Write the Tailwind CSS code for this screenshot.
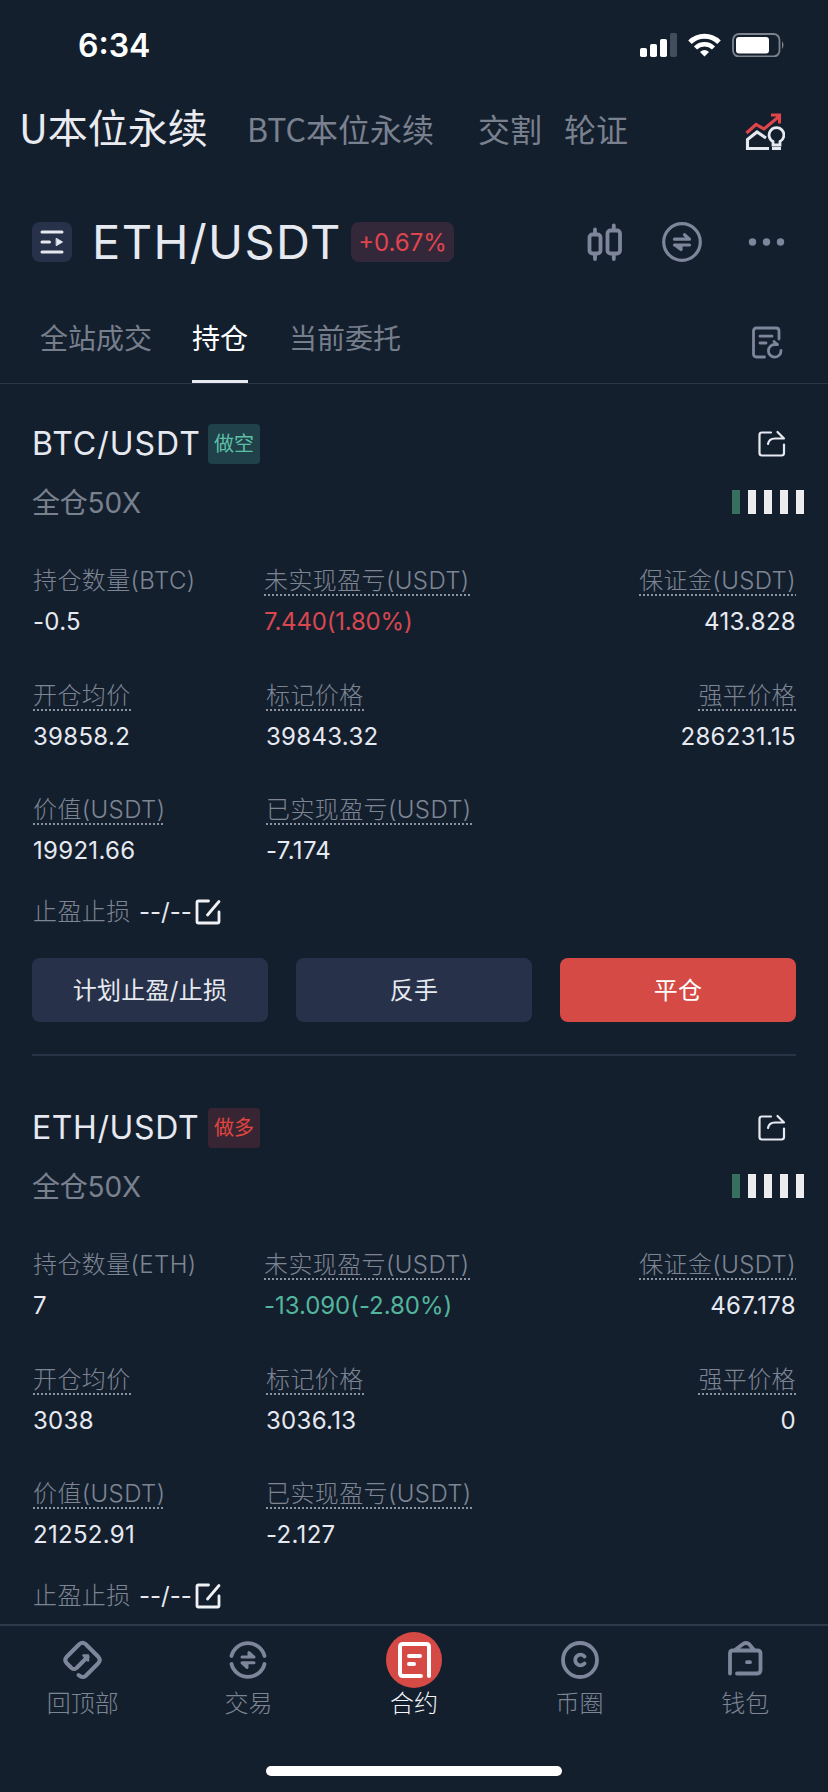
<!DOCTYPE html>
<html lang="zh-CN">
<head>
<meta charset="UTF-8" />
<meta name="viewport" content="width=device-width, initial-scale=1">
<title>合约 - 持仓</title>
<script src="https://cdn.jsdelivr.net/npm/@tailwindcss/browser@4"></script>
</head>
<body class="bg-[#141f2e] text-[#e6e9f0] font-['Inter','Noto_Sans_CJK_SC',sans-serif] w-[828px] h-[1792px] overflow-hidden flex flex-col">

<!-- Status bar -->
<div class="h-[88px] shrink-0 flex items-start justify-between pl-[78px] pr-[43px]">
  <div class="mt-[26px] text-[32px] leading-[40px] font-semibold text-white">6:34</div>
  <div class="mt-[33px] flex items-start">
    <svg width="38" height="24" viewBox="0 0 38 24" fill="#fff">
      <rect x="0" y="15" width="7" height="9" rx="1.8"/>
      <rect x="10" y="11" width="7" height="13" rx="1.8"/>
      <rect x="20" y="6" width="7" height="18" rx="1.8"/>
      <rect x="30" y="0" width="7" height="24" rx="1.8" fill="#444d5b"/>
    </svg>
    <svg class="ml-[10px]" width="33" height="24" viewBox="0 0 33 24" fill="none" stroke="#fff" stroke-width="5">
      <path d="M2 9.2A20.5 20.5 0 0 1 31 9.2"/>
      <path d="M7.5 15A12.8 12.8 0 0 1 25.5 15" stroke-width="4.4"/>
      <path d="M16.5 23.5L12 19Q16.5 15 21 19Z" fill="#fff" stroke="none"/>
    </svg>
    <svg class="ml-[11px]" width="53" height="24" viewBox="0 0 53 24">
      <rect x="1" y="1" width="46.5" height="22.5" rx="6" fill="none" stroke="#7d838d" stroke-width="1.8"/>
      <rect x="4" y="4" width="33" height="16.5" rx="3" fill="#fff"/>
      <path d="M50 8Q53 12 50 16Z" fill="#7d838d"/>
    </svg>
  </div>
</div>

<!-- Contract types -->
<nav class="h-[84px] shrink-0 flex items-start pl-[19px] pr-[43px] font-['Noto_Sans_CJK_SC',sans-serif] text-[32px] leading-[40px] text-[#7a818e]">
  <div class="mt-[18px] w-[228px] text-[40px] text-[#e9ebf0]">U本位永续</div>
  <div class="mt-[20px] w-[231px]">BTC本位永续</div>
  <div class="mt-[20px] w-[86px]">交割</div>
  <div class="mt-[20px]">轮证</div>
  <svg class="ml-auto mt-[24px]" width="40" height="40" viewBox="0 0 40 40" fill="none" stroke-width="3.1">
    <path d="M1.500 21L11 12.5L19 17L34 4.5M26 3H34.500V11.5" stroke="#e0454b"/>
    <path d="M24 36.5H2.5V27.5L12 20L21 26" stroke="#e6e9f0"/>
    <path d="M28 33V29.5A7.4 7.4 0 1 1 35 29.5V33ZM27 36.5H36" stroke="#e6e9f0" stroke-width="2.8"/>
  </svg>
</nav>

<!-- Pair -->
<div class="h-[140px] shrink-0 flex items-center pl-8 pr-[43px]">
  <div class="size-10 rounded-lg bg-[#27324a] flex items-center justify-center">
    <svg width="24" height="24" viewBox="0 0 24 24" fill="#e6e9f0" stroke="#e6e9f0" stroke-width="3" stroke-linecap="round">
      <path d="M2 2H22M2 12H9.5M2 22H22"/>
      <path d="M16.5 8.500L22.5 12L16.5 15.5Z" stroke-width="1" stroke-linejoin="round"/>
    </svg>
  </div>
  <h1 class="ml-5 w-[259px] text-[47px] leading-[60px] tracking-[1.4px] whitespace-nowrap">ETH/USDT</h1>
  <div class="w-[103px] h-10 rounded-lg bg-[#33273a] text-[#e0454f] text-2xl leading-[41px] text-center">+0.67%</div>
  <svg class="ml-auto" width="36" height="38" viewBox="0 0 36 38" fill="none" stroke="#7d869b" stroke-width="3.8" stroke-linecap="round">
    <rect x="2.5" y="11.5" width="11" height="19" rx="3"/>
    <path d="M8 6.5V11M8 31V36"/>
    <rect x="20.5" y="7.5" width="12.5" height="23" rx="3"/>
    <path d="M26.8 2.5V7M26.8 31V36"/>
  </svg>
  <svg class="ml-[39px]" width="40" height="40" viewBox="0 0 40 40" fill="none" stroke="#7d869b" stroke-width="3.2" stroke-linecap="round">
    <circle cx="20" cy="20" r="18.3"/>
    <path d="M12.5 17.2H27.5L22.5 12.8M27.5 23H12.5M13 23L19 27.5V23.5" stroke-linejoin="round"/>
  </svg>
  <svg class="ml-[46px]" width="37" height="8" viewBox="0 0 37 8" fill="#7d869b">
    <circle cx="4.5" cy="4" r="3.7"/><circle cx="18.5" cy="4" r="3.7"/><circle cx="32.5" cy="4" r="3.700"/>
  </svg>
</div>

<!-- Tabs -->
<div class="h-[72px] shrink-0 flex items-start pl-10 pr-[43px] text-[28px] leading-[36px] text-[#777e8b] border-b border-[#2c3646]">
  <div class="mt-[9px] w-[152px]">全站成交</div>
  <div class="h-[71px] w-14 pt-[9px] mr-[41px] text-white border-b-3 border-[#e6e9f0]">持仓</div>
  <div class="mt-[9px]">当前委托</div>
  <svg class="ml-auto mt-[14px]" width="34" height="34" viewBox="0 0 34 34" fill="none" stroke="#7d869b" stroke-width="2.8" stroke-linecap="round">
    <path d="M13.5 31H5.5Q2.5 31 2.5 28V5Q2.5 2 5.5 2H25Q28 2 28 5V13M9 10.2H21M9 17H15"/>
    <path d="M30 24.500A6.3 6.3 0 1 1 24 18.5H26.500M23 15.5L26.5 18.5"/>
  </svg>
</div>

<!-- Position list -->
<main id="positions" class="h-[1240px] shrink-0 overflow-hidden"></main>

<!-- Bottom bar -->
<footer class="h-[168px] shrink-0 border-t-2 border-[#2f394a] flex flex-col">
  <div class="grid grid-cols-5 pt-[6px] text-2xl leading-8 font-light text-[#7d8593] text-center">
    <div class="flex flex-col items-center">
      <svg width="56" height="56" viewBox="0 0 56 56" fill="none" stroke="#7d869b" stroke-width="4" stroke-linecap="round" stroke-linejoin="round">
        <path d="M32.5 25L21.5 36Q19 38 16.5 36L11.5 31Q9 28 11.5 25L24.500 12Q27.5 9.5 30.5 12L43.5 25Q46 28 43.5 31L30.500 44Q27.5 46.5 23.5 43"/>
        <path d="M28.5 23.5H33V28.500Z" stroke-width="2.5" fill="#7d869b"/>
      </svg>
      <div>回顶部</div>
    </div>
    <div class="flex flex-col items-center">
      <svg width="56" height="56" viewBox="0 0 56 56" fill="none" stroke="#7d869b" stroke-width="3.800" stroke-linecap="round" stroke-linejoin="round">
        <path d="M11.5 24A17 17 0 0 1 44.5 24M11.5 32A17 17 0 0 0 44.5 32"/>
        <path d="M22 25H34L29 20.5V25M34 30.800H22L27 35.5V31.5" stroke-width="3"/>
      </svg>
      <div>交易</div>
    </div>
    <div class="flex flex-col items-center text-[#f2f4f9]">
      <svg width="56" height="56" viewBox="0 0 56 56" fill="none" stroke="#fff" stroke-width="4" stroke-linecap="round" stroke-linejoin="round">
        <circle cx="28" cy="28" r="28" fill="#d54a45" stroke="none"/>
        <path d="M43 44V15Q43 12 40 12H17Q14 12 14 15V41Q14 44 17 44H35M23 24H34M23 32H28"/>
      </svg>
      <div>合约</div>
    </div>
    <div class="flex flex-col items-center">
      <svg width="56" height="56" viewBox="0 0 56 56" fill="none" stroke="#7d869b" stroke-width="3.8" stroke-linecap="round">
        <circle cx="28" cy="28" r="17"/>
        <path d="M32.5 24.5A5.3 5.3 0 1 0 32.5 31.5"/>
      </svg>
      <div>币圈</div>
    </div>
    <div class="flex flex-col items-center">
      <svg width="56" height="56" viewBox="0 0 56 56" fill="none" stroke="#7d869b" stroke-width="3.8" stroke-linecap="round" stroke-linejoin="round">
        <path d="M13 41.5V21.5Q13 18.5 16 18.5H40Q43.5 18.5 43.5 21.5V38Q43.5 41.5 40 41.5H20M18 18L26 12Q29 10 32 12L37 18M30 30.2H33"/>
      </svg>
      <div>钱包</div>
    </div>
  </div>
  <div class="mt-auto mb-4 mx-auto w-[296px] h-[10px] rounded-full bg-white"></div>
</footer>

<script>
const positions = [
  {
    pair: 'BTC/USDT', pairCls: 'tracking-[1px]', side: '做空', sideCls: 'bg-[#20404a] text-[#5dbfa5]',
    coin: 'BTC', amount: '-0.5', pnl: '7.440(1.80%)', pnlCls: 'text-[#d8474f] tracking-[-0.2px]', margin: '413.828',
    open: '39858.2', mark: '39843.32', liq: '286231.15', value: '19921.66', realized: '-7.174', actions: true,
  },
  {
    pair: 'ETH/USDT', pairCls: 'tracking-[0.6px]', side: '做多', sideCls: 'bg-[#382533] text-[#e0453f]',
    coin: 'ETH', amount: '7', pnl: '-13.090(-2.80%)', pnlCls: 'text-[#52b59c] tracking-[-0.05px]', margin: '467.178',
    open: '3038', mark: '3036.13', liq: '0', value: '21252.91', realized: '-2.127', actions: false,
  },
];

// dotted = label has an explanation popup
const cell = (label, value, { dotted = true, cls = 'items-start', valueCls = 'tracking-[0.3px]' } = {}) => `
  <div class="flex flex-col ${cls}">
    <div class="relative h-8 leading-[34px] font-light tracking-[0.4px] text-[#7d8593]">${label}
      ${dotted ? '<i class="absolute left-0 bottom-0 w-full h-[2px] bg-[repeating-linear-gradient(90deg,#8b92a0_0_2px,transparent_2px_4px)]"></i>' : ''}
    </div>
    <div class="mt-[10px] h-8 leading-8 ${valueCls}">${value}</div>
  </div>`;

const actions = `
    <div class="mt-[30px] grid grid-cols-3 gap-7 leading-[65px] text-center tracking-[0.3px]">
      <div class="h-16 rounded-lg bg-[#27324a]">计划止盈/止损</div>
      <div class="h-16 rounded-lg bg-[#27324a]">反手</div>
      <div class="h-16 rounded-lg bg-[#d54a45] text-white">平仓</div>
    </div>
    <div class="mt-8 h-[2px] bg-[#283346]"></div>`;

document.getElementById('positions').innerHTML = positions.map(p => `
  <section class="h-[684px] pt-10 px-8 text-2xl">
    <div class="h-10 flex items-center">
      <h2 class="w-44 text-[32px] leading-10 whitespace-nowrap ${p.pairCls}">${p.pair}</h2>
      <span class="w-[52px] h-10 rounded text-[20px] leading-10 text-center ${p.sideCls}">${p.side}</span>
      <svg class="ml-auto mr-[10px]" width="28" height="28" viewBox="0 0 28 28" fill="none" stroke="#e6e9f0" stroke-width="2.2" stroke-linecap="round" stroke-linejoin="round">
        <path d="M13 2.5H4Q1.5 2.5 1.5 5V23Q1.5 25.5 4 25.5H23.5Q26 25.5 26 23V14.5"/>
        <path d="M10 14Q11 8.5 17 8.5H26L19.5 2"/>
      </svg>
    </div>
    <div class="mt-5 h-9 flex items-center justify-between -mr-2">
      <div class="text-[28px] leading-9 pt-[2px] tracking-[-0.2px] text-[#7a818e]">全仓50X</div>
      <div class="flex gap-2">
        <i class="w-2 h-6 bg-[#38705f]"></i>
        <i class="w-2 h-6 bg-[#ececee]"></i>
        <i class="w-2 h-6 bg-[#ececee]"></i>
        <i class="w-2 h-6 bg-[#ececee]"></i>
        <i class="w-2 h-6 bg-[#ececee]"></i>
      </div>
    </div>
    <div class="mt-11 ml-px grid grid-cols-[233px_1fr_auto] auto-rows-[114.5px]">
      ${cell(`持仓数量(${p.coin})`, p.amount, { dotted: false })}
      ${cell('未实现盈亏(USDT)', p.pnl, { cls: 'items-start -ml-[2px]', valueCls: p.pnlCls })}
      ${cell('保证金(USDT)', p.margin, { cls: 'items-end' })}
      ${cell('开仓均价', p.open)}
      ${cell('标记价格', p.mark)}
      ${cell('强平价格', p.liq, { cls: 'items-end' })}
      ${cell('价值(USDT)', p.value)}
      ${cell('已实现盈亏(USDT)', p.realized)}
    </div>
    <div class="-mt-3 ml-px h-8 flex items-center leading-8">
      <span class="w-[106px] font-light tracking-[0.4px] text-[#7d8593]">止盈止损</span>
      <span class="w-14">--/--</span>
      <svg width="26" height="26" viewBox="0 0 26 26" fill="none" stroke="#f0f1f4" stroke-width="2.8" stroke-linecap="round" stroke-linejoin="round">
        <path d="M13.5 2H3.5Q2 2 2 3.5V22.5Q2 24 3.5 24H22.5Q24 24 24 22.5V13M12.5 16L24 2.5"/>
      </svg>
    </div>
    ${p.actions ? actions : ''}
  </section>`).join('');
</script>
</body>
</html>
